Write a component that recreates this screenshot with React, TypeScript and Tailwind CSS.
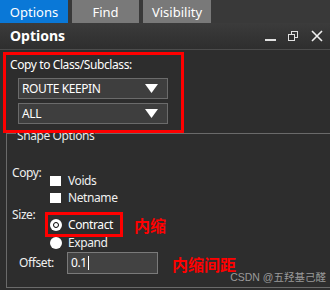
import React from "react";

const font = { fontFamily: '"Noto Sans", "Open Sans", sans-serif' };
const cjk = { fontFamily: '"Noto Sans CJK SC", sans-serif' };

function Caret() {
  return (
    <svg width="13" height="9" viewBox="0 0 13 9" className="shrink-0">
      <path d="M0 0 H13 L6.5 9 Z" fill="#ffffff" />
    </svg>
  );
}

function Dropdown({ value }: { value: string }) {
  return (
    <div className="flex h-[21px] w-[150px] items-center justify-between border border-[#6b6b6b] bg-[#3e3e3e] pl-[3px] pr-[9px] text-[12px] text-white">
      <span>{value}</span>
      <Caret />
    </div>
  );
}

export default function App() {
  return (
    <div
      className="relative h-[290px] w-[330px] overflow-hidden bg-[#2d2d2d] text-[12px] leading-[14px] tracking-[-0.4px] text-[#f0f0f0]"
      style={font}
    >
      {/* tabs */}
      <div className="flex h-[23px] gap-[4px] bg-[#393939] tracking-normal">
        <div className="flex w-[68px] items-center justify-center bg-[#0a78d7] text-[13px] text-white">
          Options
        </div>
        <div className="flex w-[67px] items-center justify-center bg-[#797979] text-[13px] text-white">
          Find
        </div>
        <div className="flex w-[68px] items-center justify-center bg-[#797979] text-[13px] text-white">
          Visibility
        </div>
      </div>

      {/* header */}
      <div className="flex h-[27px] items-center justify-between border-b border-[#4c4c4c] bg-gradient-to-b from-[#3b3b3b] to-[#2e2e2e] pl-[10px] pr-[7px] tracking-normal">
        <span className="text-[14px] font-bold text-white">Options</span>
        <div className="flex items-center gap-[12px]">
          <svg width="11" height="11" viewBox="0 0 11 11">
            <rect x="0" y="8" width="11" height="2" fill="#e0e0e0" />
          </svg>
          <svg width="11" height="11" viewBox="0 0 11 11">
            <rect x="3.5" y="0.5" width="6" height="6" fill="none" stroke="#e0e0e0" />
            <rect x="0.5" y="3.5" width="6" height="6" fill="#2f2f2f" stroke="#e0e0e0" />
          </svg>
          <svg width="12" height="12" viewBox="0 0 12 12">
            <path d="M1 1 L11 11 M11 1 L1 11" stroke="#f0f0f0" strokeWidth="1.6" />
          </svg>
        </div>
      </div>

      {/* copy to class (red annotation frame) */}
      <div className="relative z-10 ml-[3px] mt-[2px] h-[81px] w-[181px] border-[3px] border-[#ff0000] pl-[4px] pt-[3px]">
        <div className="text-white">Copy to Class/Subclass:</div>
        <div className="mt-[6px] ml-[8px] flex flex-col gap-[4px]">
          <Dropdown value="ROUTE KEEPIN" />
          <Dropdown value="ALL" />
        </div>
      </div>

      {/* shape options group */}
      <div className="ml-[6px] h-[155px] w-[330px] border border-[#6a6a6a]">
        <div className="-mt-[5px] ml-[9px] w-fit bg-[#2d2d2d] px-[1px] text-[#e8e8e8]">
          Shape Options
        </div>

        <div className="mt-[23px] flex pl-[5px]">
          <div className="w-[38px]">Copy:</div>
          <div className="flex flex-col gap-[7px] pt-[10px]">
            <div className="flex h-[10px] items-center gap-[7px]">
              <div className="h-[10px] w-[11px] bg-white" />
              <span>Voids</span>
            </div>
            <div className="flex h-[10px] items-center gap-[7px]">
              <div className="h-[10px] w-[11px] bg-white" />
              <span>Netname</span>
            </div>
          </div>
        </div>

        <div className="mt-[5px] flex pl-[5px]">
          <div className="w-[33px]">Size:</div>
          <div className="flex flex-col pt-[4px]">
            <div className="flex items-center">
              <div className="flex h-[25px] w-[78px] items-center gap-[6px] border-[3px] border-[#ff0000] pl-[2px]">
                <div className="flex h-[12px] w-[12px] items-center justify-center rounded-full bg-white">
                  <div className="h-[6px] w-[6px] rounded-full border-[1.5px] border-black" />
                </div>
                <span className="text-white">Contract</span>
              </div>
              <span className="ml-[11px] text-[16px] font-bold tracking-normal text-[#ff0000]" style={cjk}>
                内缩
              </span>
            </div>
            <div className="flex h-[12px] items-center gap-[6px] pl-[5px]">
              <div className="h-[12px] w-[12px] rounded-full bg-white" />
              <span>Expand</span>
            </div>
          </div>
        </div>

        <div className="mt-[3px] flex items-center pl-[12px]">
          <div className="w-[48px]">Offset:</div>
          <div className="flex h-[22px] w-[91px] items-center border border-[#7a7a7a] bg-[#424242] pl-[3px] text-white">
            0.1<span className="ml-[1px] inline-block h-[14px] w-[1px] bg-white" />
          </div>
          <span className="ml-[14px] mt-[2px] text-[16px] font-bold tracking-normal text-[#ff0000]" style={cjk}>
            内缩间距
          </span>
        </div>
      </div>

      <div
        className="absolute right-[4px] top-[270px] text-[10.5px] tracking-normal text-[#9a9a9a]"
        style={{ fontFamily: '"Liberation Sans", "Noto Sans CJK SC", sans-serif' }}
      >
        CSDN @五羟基己醛
      </div>
    </div>
  );
}
